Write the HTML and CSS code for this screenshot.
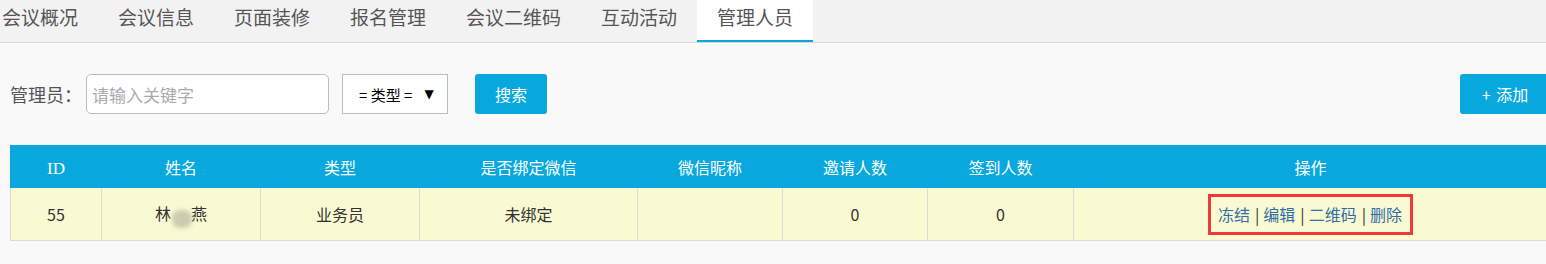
FILE: index.html
```html
<!DOCTYPE html>
<html lang="zh-CN">
<head>
<meta charset="utf-8">
<title>管理人员</title>
<link rel="stylesheet" href="styles.css">
</head>
<body>
<div class="tabs">
  <a class="tab">会议概况</a>
  <a class="tab">会议信息</a>
  <a class="tab">页面装修</a>
  <a class="tab">报名管理</a>
  <a class="tab">会议二维码</a>
  <a class="tab">互动活动</a>
  <a class="tab active">管理人员</a>
</div>
<div class="content">
  <div class="toolbar">
    <label class="label">管理员：</label>
    <input class="kw" type="text" placeholder="请输入关键字">
    <div class="select"><span class="sel-text">= 类型 =</span><span class="sel-arrow">▼</span></div>
    <button class="btn search">搜索</button>
    <button class="btn add">+ 添加</button>
  </div>
  <table class="grid">
    <colgroup>
      <col class="c-id"><col class="c-name"><col class="c-type"><col class="c-bind"><col class="c-nick"><col class="c-inv"><col class="c-sign"><col class="c-op">
    </colgroup>
    <thead>
      <tr>
        <th><span class="latin">ID</span></th>
        <th>姓名</th>
        <th>类型</th>
        <th>是否绑定微信</th>
        <th>微信昵称</th>
        <th>邀请人数</th>
        <th>签到人数</th>
        <th>操作</th>
      </tr>
    </thead>
    <tbody>
      <tr>
        <td>55</td>
        <td>林<span class="blur"></span>燕</td>
        <td>业务员</td>
        <td>未绑定</td>
        <td></td>
        <td>0</td>
        <td>0</td>
        <td><span class="ops"><a class="op">冻结</a><span class="sep">|</span><a class="op">编辑</a><span class="sep">|</span><a class="op">二维码</a><span class="sep">|</span><a class="op">删除</a></span></td>
      </tr>
    </tbody>
  </table>
</div>
</body>
</html>
```
FILE: styles.css
```css
html, body {
  margin: 0;
  padding: 0;
  background: #f9f9f9;
  overflow: hidden;
  font-family: "Noto Sans CJK SC", "Noto Sans", sans-serif;
}

.tabs {
  display: flex;
  height: 42px;
  margin-left: -18px;
  background: #f2f2f2;
  border-bottom: 1px solid #d8d8d8;
}

.tab {
  display: block;
  padding: 0 20px;
  height: 40px;
  line-height: 34px;
  font-size: 19px;
  color: #555;
  border-bottom: 2px solid transparent;
  white-space: nowrap;
}

.tab.active {
  background: #fff;
  border-bottom-color: #0aa6e0;
}

.content {
  width: 1540px;
  padding-left: 10px;
}

.toolbar {
  display: flex;
  align-items: center;
  margin-top: 31px;
  height: 40px;
}

.label {
  font-size: 18px;
  color: #555;
  width: 76px;
}

.kw {
  box-sizing: border-box;
  width: 243px;
  height: 40px;
  border: 1px solid #bdbdbd;
  border-radius: 5px;
  padding: 0 5px;
  font-family: inherit;
  font-size: 17px;
  color: #333;
  background: #fff;
  outline: none;
}

.kw::placeholder {
  color: #aaa;
}

.select {
  box-sizing: border-box;
  margin-left: 13px;
  width: 106px;
  height: 40px;
  border: 1px solid #bcbcbc;
  background: #fff;
  display: flex;
  align-items: center;
  padding-left: 16px;
  font-size: 15px;
  color: #000;
}

.sel-text {
  white-space: pre;
}

.sel-arrow {
  margin-left: 12px;
  font-size: 12px;
  font-family: "DejaVu Sans", sans-serif;
}

.btn {
  box-sizing: border-box;
  height: 40px;
  border: none;
  border-radius: 3px;
  background: #08a8df;
  color: #fff;
  font-family: inherit;
  font-size: 16px;
  padding: 0;
}

.search {
  margin-left: 27px;
  width: 72px;
}

.add {
  margin-left: auto;
  width: 90px;
  word-spacing: 2px;
}

.grid {
  margin-top: 31px;
  width: 1537px;
  table-layout: fixed;
  border-collapse: collapse;
}

.c-id { width: 91px; }
.c-name { width: 159px; }
.c-type { width: 159px; }
.c-bind { width: 218px; }
.c-nick { width: 145px; }
.c-inv { width: 145px; }
.c-sign { width: 146px; }
.c-op { width: 474px; }

.grid th {
  height: 41px;
  padding: 0;
  background: #08a8df;
  border: 1px solid #08a8df;
  color: #fff;
  font-size: 16px;
  font-weight: normal;
  text-align: center;
}

.latin {
  font-family: "Liberation Serif", serif;
  font-size: 17px;
}

.grid td {
  height: 52px;
  padding: 0;
  background: #fafad2;
  border: 1px solid #dcdcd4;
  color: #333;
  font-size: 16px;
  text-align: center;
  vertical-align: middle;
}

.blur {
  display: inline-block;
  width: 20px;
  height: 18px;
  margin: 0 -1px 0 1px;
  vertical-align: -8px;
  border-radius: 8px;
  background: #cccbb0;
  filter: blur(2px);
}

.ops {
  display: inline-block;
  border: 3px solid #f2373a;
  padding: 6px 8px 6px 7px;
  line-height: 23px;
  color: #333;
  font-size: 16px;
}

.op {
  color: #2f6ea6;
}

.sep {
  margin: 0 4px 0 5px;
}
```
